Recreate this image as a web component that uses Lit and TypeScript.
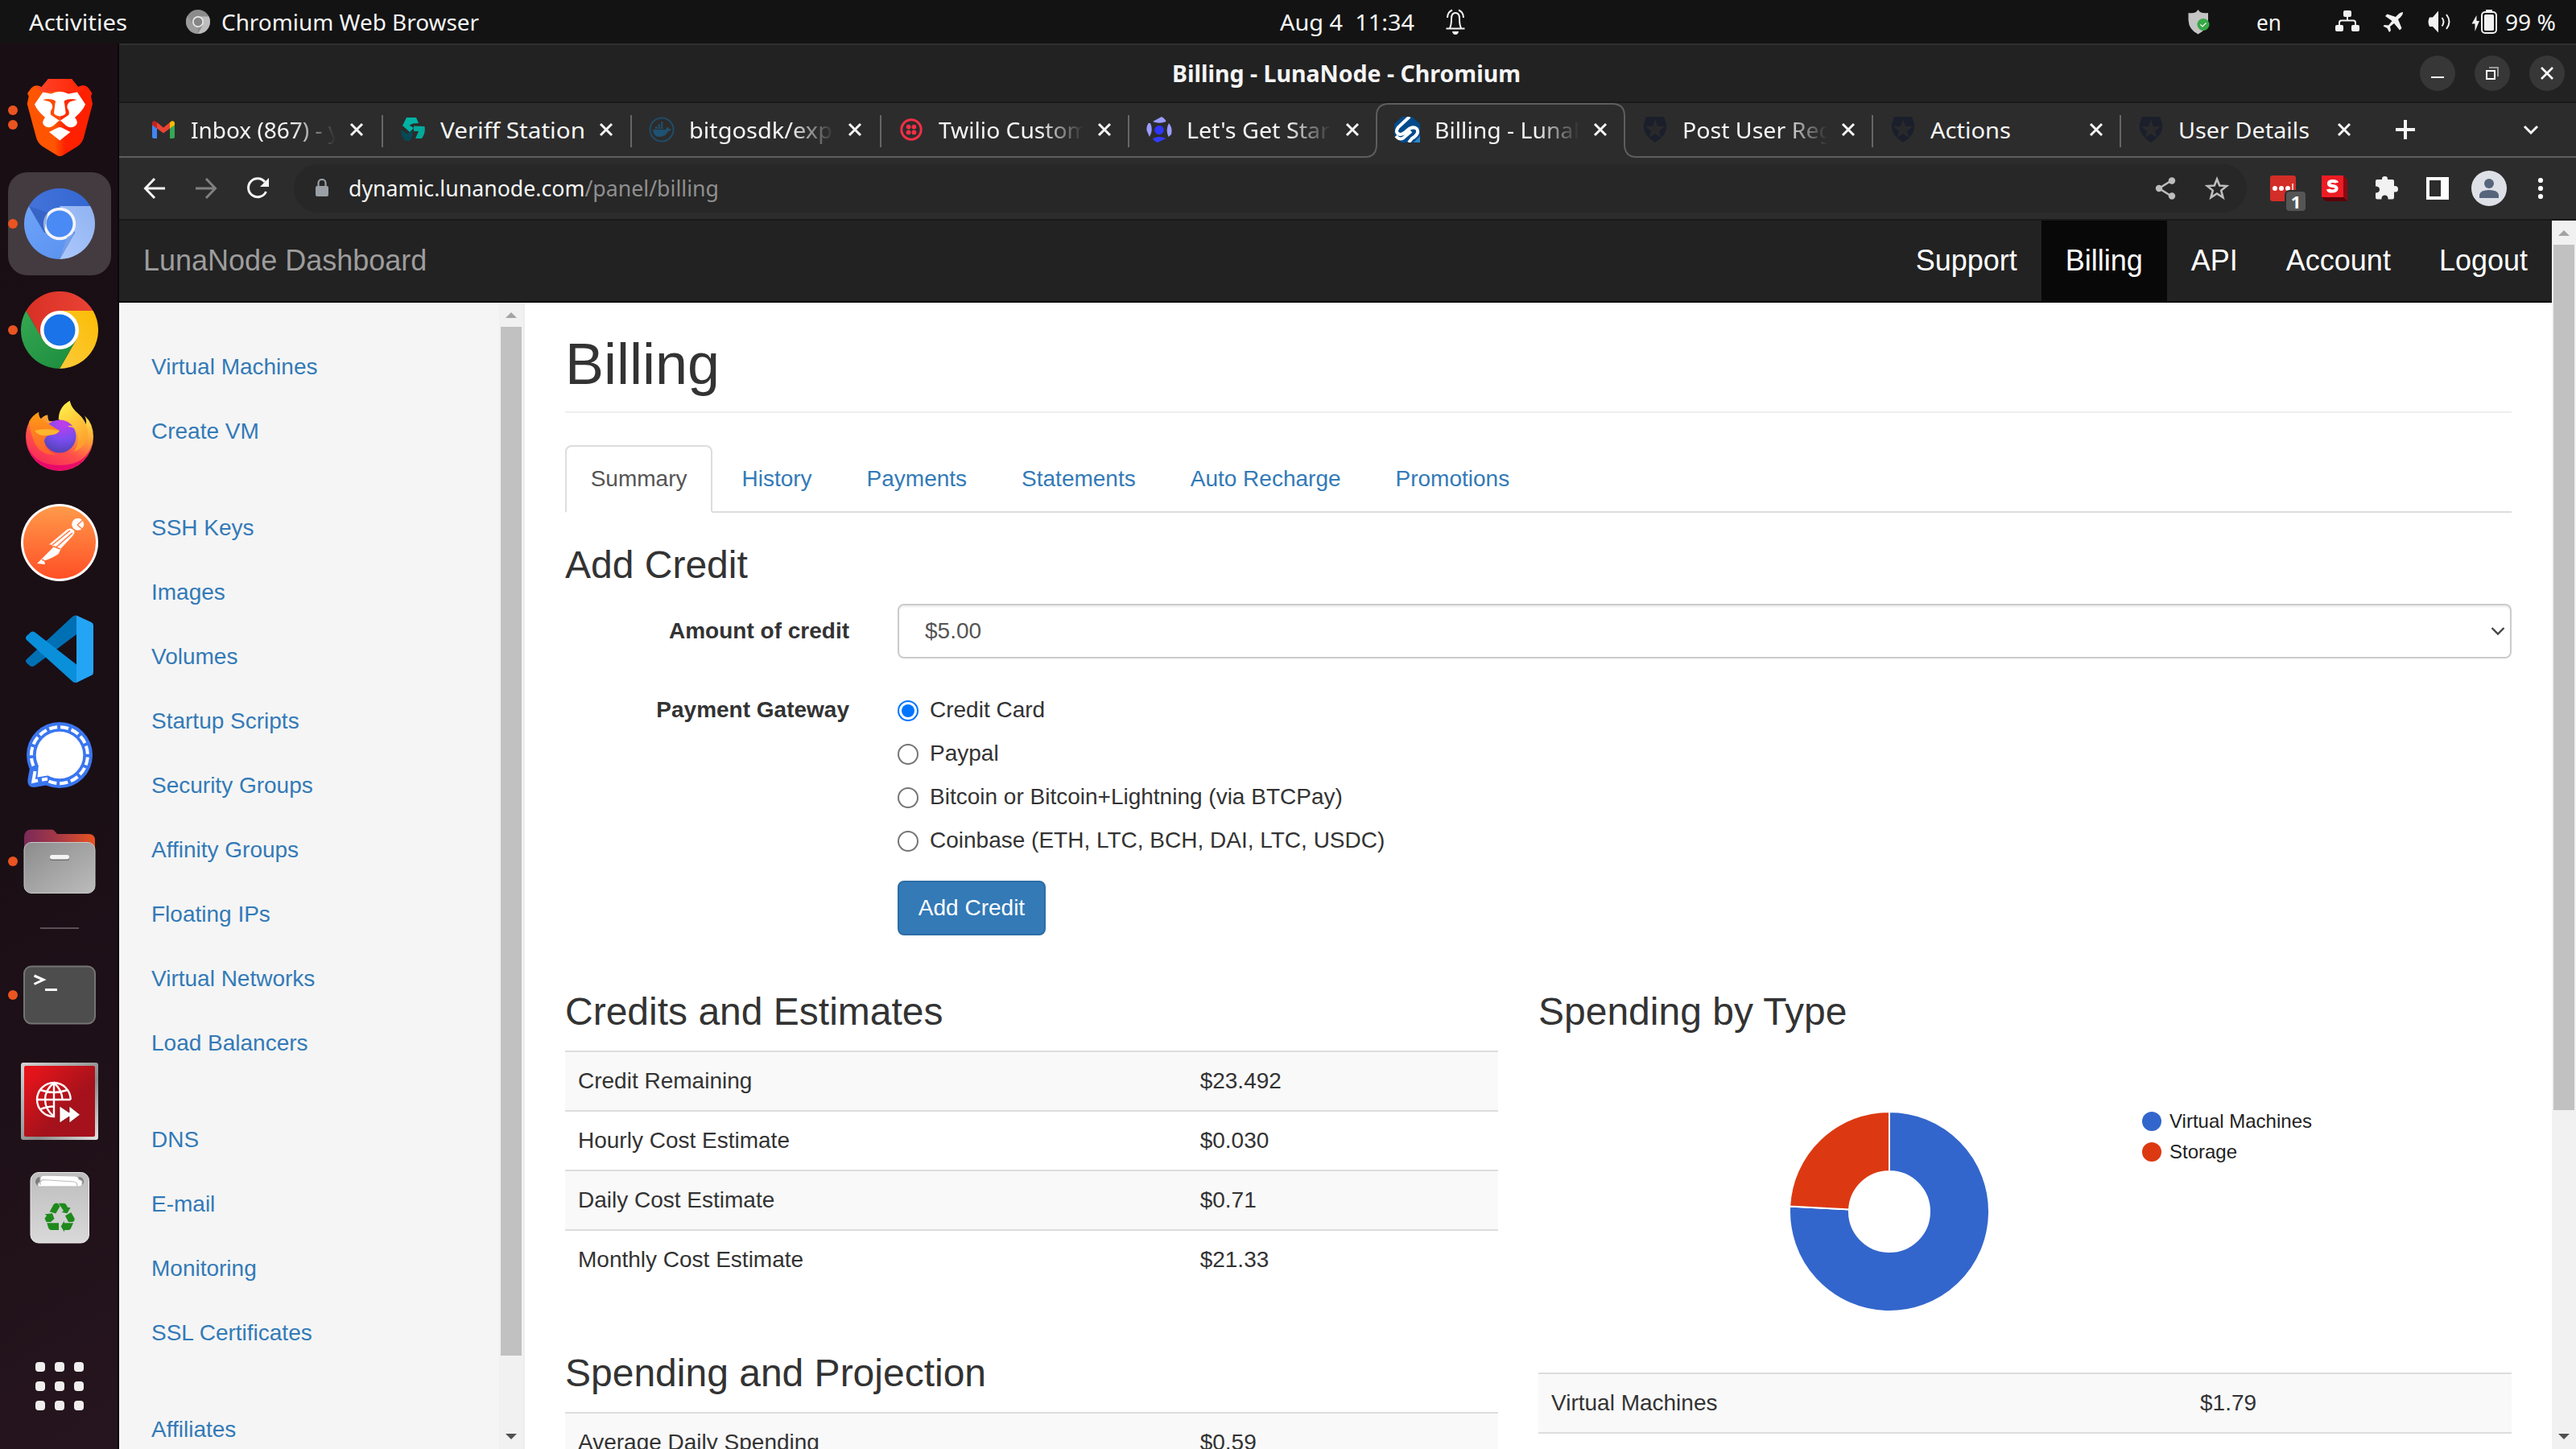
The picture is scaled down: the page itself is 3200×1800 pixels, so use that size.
import { LitElement, html, svg, css } from "lit";
import { customElement } from "lit/decorators.js";
import { classMap } from "lit/directives/class-map.js";

/* Shell label: real text set to a fixed advance width. */
const label = (text: unknown, width: number, color = "#f5f5f5", weight = 400) => html`
  <svg class="label" width=${width} height="40" viewBox="0 0 ${width} 40">
    <text x="0" y="31" fill=${color} font-weight=${weight} textLength=${width} lengthAdjust="spacingAndGlyphs">${text}</text>
  </svg>`;

const icon = (w: number, h: number, body: unknown) => html`
  <svg class="icon" width=${w} height=${h} viewBox="0 0 ${w} ${h}">${body}</svg>`;

/* ---------- dock artwork, 96 x 96 ---------- */
const brave = svg`
  <defs>
    <linearGradient id="bv" x1="0" x2="1"><stop offset=".42" stop-color="#ff5500"/><stop offset=".58" stop-color="#ff2000"/></linearGradient>
    <linearGradient id="bt" x1="0" x2="1"><stop offset="0" stop-color="#ff452a"/><stop offset="1" stop-color="#ff2000"/></linearGradient>
  </defs>
  <path fill="url(#bv)" d="M34 0H63L71 10Q79 6 84 11.500L88.500 18L87 21.500L89 31L78 73Q76 80 70 84L53 94.500Q48.300 97.500 44 94.500L27 84Q21 80 19 73L7.700 31L9.700 21.500L8 18L12.700 11.500Q18 6 25.700 10Z"/>
  <path fill="url(#bt)" d="M34 0H63L71 10Q79 6 84 11.500L70 17L48.300 15L27 17L18 10L25.700 10Z"/>
  <path fill="#fff" d="M27.300 16.400L37.700 18.400Q48.300 13 59 18.400L70 16.400L80 31.400Q78 38 67 48Q72 54 68 58Q62 62.500 56 58L50 52.500Q48.300 51.300 46.600 52.500L40.500 58Q34 62.500 29 58Q25 54 30 48Q19 38 17 31.400Z"/>
  <path fill="#ff4a00" d="M27 26Q36 23.500 42.500 27Q43.500 28.500 42.500 30.500L41 42Q41 45 48.300 46.500V52L45 50L37 44.500Q36 40 39 36.500Q40 31.500 36 28.500Q32 27 27 26Z"/>
  <path fill="#ff2a00" d="M69.600 26Q60.600 23.500 54.100 27Q53.100 28.500 54.100 30.500L55.600 42Q55.600 45 48.300 46.500V52L51.600 50L59.600 44.500Q60.600 40 57.600 36.500Q56.600 31.500 60.600 28.500Q64.600 27 69.600 26Z"/>
  <path fill="#fff" d="M35 66L46 60.500Q48.300 59.500 50.600 60.500L61.500 66L48.300 76.500Z"/>`;

const chromeWheel = (id: string, a: string[], b: string[], c: string[], ring: string, dot: string, r1: number, r2: number) => svg`
  <defs>
    <linearGradient id="${id}a" x1="0" x2="1"><stop offset="0" stop-color=${a[0]}/><stop offset="1" stop-color=${a[1]}/></linearGradient>
    <linearGradient id="${id}b" x1=".3" y1="1" x2="1" y2="0"><stop offset="0" stop-color=${b[0]}/><stop offset="1" stop-color=${b[1]}/></linearGradient>
    <linearGradient id="${id}c" x1="0" y1="0" x2=".8" y2="1"><stop offset="0" stop-color=${c[0]}/><stop offset="1" stop-color=${c[1]}/></linearGradient>
  </defs>
  <circle cx="48" cy="48" r="30" fill=${a[0]}/>
  <path fill="url(#${id}a)" d="M6.400 24A48 48 0 0 1 89.600 24H48L27.200 60Z"/>
  <path fill="url(#${id}b)" d="M89.600 24A48 48 0 0 1 48 96L68.800 60L48 24Z"/>
  <path fill="url(#${id}c)" d="M48 96A48 48 0 0 1 6.400 24L27.200 60H68.800Z"/>
  <circle cx="48" cy="48" r=${r1} fill=${ring}/><circle cx="48" cy="48" r=${r2} fill=${dot}/>`;

const chromium = svg`<g transform="translate(4 4) scale(.9167)">
  ${chromeWheel("cm", ["#4373da", "#3467d2"], ["#a9c6fb", "#8fb2f0"], ["#6ea3fa", "#5b93f0"], "#f4f5f9", "#4a8af4", 22, 18)}
  <path fill="#2a56b4" opacity=".45" d="M6.400 24L27.200 60L32 33Z"/>
  <path fill="#7da3e6" opacity=".7" d="M48 96L68.800 60L58 66Z"/></g>`;
const chrome = chromeWheel("ch", ["#d93025", "#ea4335"], ["#fcc934", "#fbbc04"], ["#34a853", "#1e8e3e"], "#fff", "#1a73e8", 24, 19.500);

const firefox = svg`
  <defs>
    <linearGradient id="fa" x1=".8" y1=".1" x2=".35" y2="1"><stop offset="0" stop-color="#fff44f"/><stop offset=".35" stop-color="#ffa436"/><stop offset=".65" stop-color="#ff4f4b"/><stop offset="1" stop-color="#f5275a"/></linearGradient>
    <radialGradient id="fb" cx=".6" cy=".1" r="1"><stop offset="0" stop-color="#c63be8"/><stop offset=".5" stop-color="#7a4df0"/><stop offset="1" stop-color="#4a3fa8"/></radialGradient>
    <linearGradient id="fc" x1=".2" y1="0" x2=".6" y2="1"><stop offset="0" stop-color="#fff14a"/><stop offset="1" stop-color="#ff9a2b"/></linearGradient>
    <linearGradient id="fd" x1="0" y1="0" x2="0" y2="1"><stop offset="0" stop-color="#ff9d14"/><stop offset="1" stop-color="#ff5f30"/></linearGradient>
  </defs>
  <path fill="url(#fa)" d="M22.300 18Q21 24 23.500 27.500Q28 22 33.300 21.400Q33 26 35 29L48 30Q46 12 60.700 4Q62 12 70 19Q78 26 80.700 33Q82 28 79.300 22.500Q90 32 90 49A42 42 0 0 1 6 49Q6 28 22.300 18Z"/>
  <path fill="#e3006f" opacity=".8" d="M6.500 55A42 42 0 0 0 89.500 55Q82 84 48 84Q14 84 6.500 55Z"/>
  <circle cx="48" cy="48" r="20.500" fill="url(#fb)"/>
  <path fill="url(#fc)" d="M46.700 27Q47 11 60.700 4Q62 12 70 19Q81 28 83 42Q84 60 66 67Q74 55 70 44Q68 36 58 36Q62 33 66 37Q60 27 46.700 27Z"/>
  <path fill="url(#fd)" d="M10 30Q14 22 22 18Q22 25 27 28Q33 31 38 35L48 41Q46 45 38 46Q30 47 29 53Q30 66 44 71Q26 72 18 58Q12 46 10 30Z"/>
  <path fill="#ffb52e" d="M17 41Q30 37 48 41Q45 46 36 46.500Q22 49 17 41Z"/>`;

const postman = svg`
  <defs><linearGradient id="pm" x1="0" y1="0" x2="0" y2="1"><stop offset="0" stop-color="#ff9a4a"/><stop offset="1" stop-color="#ff4f26"/></linearGradient></defs>
  <circle cx="48" cy="48" r="48" fill="#fff"/><circle cx="48" cy="48" r="45" fill="url(#pm)"/>
  <circle cx="70.700" cy="25.300" r="7.500" fill="#fff"/>
  <path d="M70 26L77 20M70 26L76 31" stroke="#ff7a3c" stroke-width="1.300" fill="none"/>
  <path fill="#fff" d="M35 50.500L57 32Q62 28.500 66 33Q67.500 36 64 40L50 55L46.700 62Q40 67 29 70.500L30 75L20 74L25.500 68.500L40.500 53.500L38 50.500Z"/>
  <path d="M39 51L61 33M43.500 54L64 36M40 52.500L49 56M26 69L30 71" stroke="#ff7439" stroke-width="1.500" fill="none"/>`;

const vscode = svg`
  <path fill="#0070b4" d="M7 61L64 8Q66 6 69 6.500V30L17 69Q14 71 11 69L7 65.500Q5 63 7 61Z"/>
  <path fill="#0a8fdb" d="M7 32L12 27.500Q14.500 25.500 17.500 27.500L69 67.500V90Q66 90.500 64 88.500L7 37Q5 34.500 7 32Z"/>
  <path fill="#24a4f4" d="M69 6.500L87.500 15Q90 16.200 90 19V77Q90 80 87.500 81L69 90Z"/>`;

const signal = svg`
  <circle cx="48" cy="48" r="41" fill="#3a76f0"/>
  <path fill="#3a76f0" d="M11 64L8.300 79Q8 88.500 17 88L34 85Z"/>
  <path fill="none" stroke="#fff" stroke-width="4" stroke-dasharray="10.200 3.800" d="M34.500 80.500A35 35 0 1 0 15.500 61.500"/>
  <path fill="none" stroke="#fff" stroke-width="4" d="M17.500 68L15.300 80.700L21 79.500M26 78.700L33 77.500"/>
  <circle cx="48" cy="48" r="29.300" fill="#fff"/><path fill="#fff" d="M22 60L20.500 75.500L36 73Z"/>`;

const files = svg`
  <defs>
    <linearGradient id="fl" x1="0" x2="1"><stop offset="0" stop-color="#7a2a58"/><stop offset=".5" stop-color="#a83a45"/><stop offset="1" stop-color="#e95420"/></linearGradient>
    <linearGradient id="fg" x1="0" y1="0" x2="1" y2="1"><stop offset="0" stop-color="#8c8c8c"/><stop offset="1" stop-color="#bcbcbc"/></linearGradient>
  </defs>
  <path fill="url(#fl)" d="M4 50V18Q4 8.500 13 8.500H38Q40.500 8.500 42 10.500L45 14H84Q92 14 92 22V50Z"/>
  <rect x="4" y="24.500" width="88" height="63" rx="9" fill="url(#fg)" stroke="#c9c9c9"/>
  <rect x="36" y="42" width="24" height="5" rx="2.500" fill="#6e6e6e"/><rect x="36" y="40" width="24" height="5.500" rx="2.700" fill="#f4f4f4"/>`;

const terminal = svg`
  <rect x="4" y="12.500" width="88" height="71" rx="9" fill="#4d4d4d" stroke="#747474" stroke-width="2"/>
  <path d="M16.500 24L28 29L16.500 34.500" fill="none" stroke="#fff" stroke-width="3"/><path d="M30 41.500H45" stroke="#fff" stroke-width="3"/>`;

const remote = svg`
  <defs>
    <linearGradient id="rr" x1="0" y1="0" x2="1" y2="1"><stop offset=".1" stop-color="#e5141b"/><stop offset=".6" stop-color="#a5121b"/></linearGradient>
    <linearGradient id="rg" x1="0" y1="0" x2="1" y2="1"><stop offset="0" stop-color="#d4d4d4"/><stop offset=".6" stop-color="#8a8a8a"/><stop offset="1" stop-color="#e4e4e4"/></linearGradient>
  </defs>
  <rect width="96" height="96" rx="3" fill="url(#rg)"/><rect x="4" y="4" width="88" height="88" rx="2" fill="url(#rr)"/>
  <g fill="none" stroke="#fff" stroke-width="2.400">
    <path d="M61.700 46H20A21 21 0 0 0 41 67V25A21 21 0 0 0 20 46"/><path d="M41 25A21 21 0 0 1 61.700 46"/>
    <path d="M41 25Q30 34 30 46T41 67M41 25Q51 34 51.500 46M24 34Q41 40 58 34M24 58Q32 54.500 41 54.500"/>
  </g>
  <path fill="#fff" stroke="#7d0d13" stroke-width=".8" d="M48 54L60 62V54L73.500 64.700L60 75V67L48 75Z"/>`;

const trash = svg`
  <defs><linearGradient id="tr" x1="0" y1="0" x2="0" y2="1"><stop offset="0" stop-color="#bdbdbd"/><stop offset="1" stop-color="#d9d9d9"/></linearGradient></defs>
  <rect x="12" y="4.500" width="72.500" height="87.500" rx="10" fill="url(#tr)" stroke="#ececec"/>
  <rect x="18" y="10" width="60" height="12" rx="6" fill="#7c7c7c"/>
  <path fill="#fff" stroke="#bbb" stroke-width="1.200" d="M24 20V11Q25 8 29 8L67 9Q71 9 72 13L76 15V20Q76 22 72 22H23Q20 22 21.500 18L27 13.500L66 16Q70 16 70 22"/>
  <path fill="#1f8a1c" d="M35.700 53.200L40.700 44Q43 41.500 46 43L48.500 46.500L43.300 55.400ZM46.700 42.700H54Q56 43 58 47.700L61.500 48.300L57.500 55.200L50.500 53.800L53 52.300ZM29.700 56.200L39 55.200L41.500 62L37 66H31.500L29.500 61.500L32 58ZM32.300 67.300H47V76H37Q35 76 34 73ZM55 58.300L62.300 54L66.700 61.800Q67 66 63 66H59ZM49.700 71.500L53.700 64.500V67.300H65L62 74Q61 76 59 76H54V78.600Z"/>`;

interface DockItem { art: unknown; dots: number; active?: boolean }
const dockTop: DockItem[] = [
  { art: brave, dots: 2 }, { art: chromium, dots: 1, active: true }, { art: chrome, dots: 1 }, { art: firefox, dots: 0 },
  { art: postman, dots: 0 }, { art: vscode, dots: 0 }, { art: signal, dots: 0 }, { art: files, dots: 1 },
];
const dockBottom: DockItem[] = [{ art: terminal, dots: 1 }, { art: remote, dots: 0 }, { art: trash, dots: 0 }];

/* ---------- tab favicons, 32 x 32 ---------- */
const gmail = svg`
  <path fill="#4285f4" d="M2 10L8 14V27H4Q2 27 2 25Z"/><path fill="#34a853" d="M24 14L30 10V25Q30 27 28 27H24Z"/>
  <path fill="#ea4335" d="M8 7L16 13.500L24 7V14.500L16 20.500L8 14.500Z"/>
  <path fill="#c5221f" d="M2 8.500Q2 5 5.500 5.200L8 7V14.500L2 10.200Z"/><path fill="#fbbc04" d="M30 8.500Q30 5 26.500 5.200L24 7V14.500L30 10.200Z"/>`;
const veriff = svg`
  <path fill="#00b3a4" d="M8 1H20L23 8L16 8.500L11.500 10.500L17 14L12 19L3 11Z"/>
  <path fill="#00a99b" d="M17 11.500L30.500 12Q32 20 27 27H19L23 18H17Z"/><path fill="#054a55" d="M1 16L8.500 21L15.500 17V24L12 30H7Q1 25 1 16Z"/>`;
const docker = svg`
  <circle cx="16" cy="16" r="14.500" fill="none" stroke="#1f4c68" stroke-width="2"/>
  <path fill="#1f5273" d="M5 16H21Q22 13 24 13L25 15L28 15.500Q27 18 24 18Q21 25 13 25Q6 25 5 16ZM8 12.500h2.500v2.500h-2.500zM11.500 12.500h2.500v2.500h-2.500zM15 12.500h2.500v2.500h-2.500zM11.500 9.500h2.500v2.300h-2.500zM15 9.500h2.500v2.300h-2.500zM15 6.500h2.500v2.300h-2.500z"/>`;
const twilio = svg`
  <circle cx="16" cy="16" r="12.200" fill="none" stroke="#f22f46" stroke-width="3"/>
  <g fill="#f22f46"><circle cx="12.600" cy="12.600" r="2.900"/><circle cx="19.400" cy="12.600" r="2.900"/><circle cx="12.600" cy="19.400" r="2.900"/><circle cx="19.400" cy="19.400" r="2.900"/></g>`;
const orbit = svg`
  <circle cx="16" cy="16.500" r="5.700" fill="#2f37ff"/>
  <path fill="#9a9dff" d="M8 6L19 0Q24 3 24.500 6Q16 9.500 8 6ZM2.500 8Q0 12 0.500 17L4 25Q9 17 5 8ZM28 8Q33 14 31 22L27.500 25Q23.500 16 28 8Z"/>
  <path fill="#343cff" d="M8 27Q16 23 24.500 27L14 32Q10 31 8 27Z"/>`;
const luna = svg`
  <path fill="#004a8c" d="M10 0H22L32 9V32H9L0 23V9Z"/><path fill="#2f86c5" d="M24 32L32 24V32Z"/>
  <path d="M19 0L5 13Q0 20 7 22Q11 22 16 17Q23 11 28 15Q32 21 22 27L18 32M2 24Q8 31 14 24L21 18" fill="none" stroke="#fff" stroke-width="4"/>`;
const auth0 = svg`
  <path fill="#1b1f2b" d="M5 0H27L30 9Q32 22 16 32Q0 22 2 9Z"/>
  <path fill="#2c2c2c" d="M16 3L19 12H28L21 18L23.500 26L16 21L8.500 26L11 18L4 12H13Z" opacity=".85"/>`;

interface Tab { art: unknown; text: string; textWidth: number; width: number; active?: boolean; sep?: boolean; fade?: boolean }
const tabs: Tab[] = [
  { art: gmail, text: "Inbox (867) - y", textWidth: 185, width: 310, sep: true, fade: true },
  { art: veriff, text: "Veriff Station", textWidth: 180, width: 309, sep: true },
  { art: docker, text: "bitgosdk/exp", textWidth: 178, width: 310, sep: true, fade: true },
  { art: twilio, text: "Twilio Custom", textWidth: 186, width: 308, sep: true, fade: true },
  { art: orbit, text: "Let's Get Star", textWidth: 178, width: 308, fade: true },
  { art: luna, text: "Billing - LunaN", textWidth: 194, width: 308, active: true, fade: true },
  { art: auth0, text: "Post User Reg", textWidth: 187, width: 308, sep: true, fade: true },
  { art: auth0, text: "Actions", textWidth: 100, width: 308, sep: true },
  { art: auth0, text: "User Details", textWidth: 163, width: 308 },
];

const menuGroups = [
  ["Virtual Machines", "Create VM"],
  ["SSH Keys", "Images", "Volumes", "Startup Scripts", "Security Groups", "Affinity Groups", "Floating IPs", "Virtual Networks", "Load Balancers"],
  ["DNS", "E-mail", "Monitoring", "SSL Certificates"],
  ["Affiliates"],
];

const slices = [
  { name: "Virtual Machines", share: 0.7583, color: "#3366cc" },
  { name: "Storage", share: 0.2417, color: "#dc3912" },
];

@customElement("app-root")
export class AppRoot extends LitElement {
  static styles = css`
    :host { display: block; font-family: "Liberation Sans", Arial, sans-serif; }
    * { box-sizing: border-box; }
    svg { display: block; flex: none; }
    .screen { width: 3200px; height: 1800px; overflow: hidden; display: flex; flex-direction: column; background: #131313; }
    .label { overflow: visible; font-family: "Noto Sans", "Open Sans", sans-serif; font-size: 28px; }
    .label text { white-space: pre; }

    .topbar { height: 54px; flex: none; background: #131313; display: grid; grid-template-columns: 1590px 1fr auto; align-items: center; }
    .group { display: flex; align-items: center; }
    .g-left { padding-left: 36px; }
    .g-left .icon { margin: 0 14px 0 73px; }
    .g-mid { gap: 38px; }
    .g-right { padding-right: 25px; }
    .sp-en { margin: 0 67px 0 58px; }
    .sp-a { margin-right: 29px; } .sp-b { margin-right: 29px; } .sp-c { margin-right: 25px; } .sp-d { margin-right: 10px; }

    .below { flex: 1; min-height: 0; display: flex; }
    .dock { width: 148px; flex: none; background: linear-gradient(150deg, #190e14 0%, #1b0f16 55%, #1e1018 72%, #26151e 100%); border-right: 2px solid #0c070a; padding-top: 26px; display: flex; flex-direction: column; }
    .dock-item { height: 132px; flex: none; display: grid; place-items: center; position: relative; padding-left: 2px; }
    .tile { width: 128px; height: 128px; border-radius: 24px; display: grid; place-items: center; }
    .tile.on { background: #443b40; }
    .dots { position: absolute; left: 10px; top: 0; bottom: 0; display: flex; flex-direction: column; justify-content: center; gap: 5.500px; }
    .dots i { width: 12px; height: 12px; border-radius: 6px; background: #e95420; }
    .dock-sep { height: 2px; width: 48px; background: #5a5056; margin: 16px 0 16px 50px; flex: none; }
    .apps { display: grid; grid-template-columns: repeat(3, 12px); gap: 12px; margin: 126px 0 0 44px; }
    .apps i { width: 12px; height: 12px; border-radius: 4px; background: #f0efee; }

    .window { flex: 1; min-width: 0; display: flex; flex-direction: column; background: #2c2c2c; }
    .titlebar { height: 74px; flex: none; background: #222; border-top: 2px solid #303030; border-bottom: 2px solid #191919; display: grid; grid-template-columns: 1308px 1fr auto; align-items: center; }
    .winbtns { display: flex; gap: 24px; padding-right: 14px; }
    .winbtn { width: 44px; height: 44px; border-radius: 22px; background: #373737; display: grid; place-items: center; }
    .tabstrip { height: 68px; flex: none; border-bottom: 2px solid #5e5e5e; display: flex; padding-left: 17px; }
    .tab { height: 66px; flex: none; display: flex; align-items: center; position: relative; padding-left: 22px; }
    .tab .icon { z-index: 1; position: relative; }
    .tab-text { width: 180px; margin-left: 18px; overflow: hidden; height: 48px; padding-top: 4px; position: relative; z-index: 1; }
    .tab-text.fade { -webkit-mask-image: linear-gradient(90deg, #000 70%, transparent 100%); mask-image: linear-gradient(90deg, #000 70%, transparent 100%); }
    .tab .x { margin-left: 17px; }
    .tab.sep::after { content: ""; position: absolute; right: -1px; top: 15px; width: 2px; height: 40px; background: #666; }
    .outline { position: absolute; left: -16px; top: 0; }
    .plus { margin-left: 34px; align-self: center; }
    .caret { margin: 0 46px 0 auto; align-self: center; }
    .toolbar { height: 78px; flex: none; border-bottom: 2px solid #191919; display: flex; align-items: center; padding-left: 28px; }
    .nav { display: flex; gap: 32px; }
    .omni { margin-left: 29px; width: 2426px; height: 60px; border-radius: 30px; background: #272727; display: flex; align-items: center; padding: 0 21px 0 26px; }
    .url { margin: 0 0 2px 24px; }
    .path { fill: #8f8f8f; }
    .omni-end { margin-left: auto; display: flex; gap: 32px; }
    .exts { display: flex; align-items: center; margin-left: 29px; }
    .ext { position: relative; }
    .badge { position: absolute; left: 20px; top: 20px; width: 24px; height: 24px; border-radius: 4px; background: #555; color: #fff; font: bold 22px/25px "Noto Sans", sans-serif; text-align: center; box-shadow: 0 0 0 2px #2c2c2c; }
    .e2 { margin-left: 32px; } .e3 { margin-left: 34px; } .e4 { margin-left: 34px; } .e5 { margin-left: 28px; } .e6 { margin-left: 37px; }

    .viewport { flex: 1; min-height: 0; display: flex; background: #fff; }
    .page { flex: 1; min-width: 0; display: flex; flex-direction: column; font-size: 28px; line-height: 40px; color: #333; }
    .navbar { height: 102px; flex: none; background: #222; border-bottom: 2px solid #080808; display: flex; font-size: 36px; line-height: 100px; color: #fff; padding-left: 30px; }
    .brand { color: #9d9d9d; margin-right: auto; }
    .navlink { padding: 0 30px; }
    .navlink.on { background: #080808; }
    .body { flex: 1; min-height: 0; display: flex; }
    .side { width: 504px; flex: none; background: #f5f5f5; border-right: 2px solid #eee; display: flex; }
    .menu { flex: 1; padding: 40px 0 0 40px; overflow: hidden; color: #337ab7; }
    .menu-group { margin-bottom: 40px; }
    .menu-item { height: 80px; padding-top: 20px; }
    .bar { width: 30px; flex: none; background: #f1f1f1; display: flex; flex-direction: column; align-items: center; }
    .bar .up { margin: 12px 0 11px; } .bar .down { margin: auto 0 12px; }
    .thumb { width: 26px; background: #c1c1c1; flex: none; }
    .thumb.short { height: 1278px; } .thumb.page-thumb { height: 1075px; }

    .main { flex: 1; min-width: 0; overflow: hidden; padding: 36px 50px 0; }
    .title { margin: 0; font-weight: 400; font-size: 72px; line-height: 80px; padding-bottom: 19px; border-bottom: 2px solid #eee; }
    .tabs { display: flex; gap: 4px; margin-top: 40px; height: 84px; box-shadow: inset 0 -2px 0 #ddd; color: #337ab7; margin-left: -0.330px; }
    .ptab { padding: 22px 32px; }
    .ptab.on { border: 2px solid #ddd; border-bottom-color: #fff; border-radius: 8px 8px 0 0; background: #fff; color: #555; padding: 20px 30px; }
    .h3 { margin: 0; font-weight: 400; font-size: 48px; line-height: 53px; }
    .h3.credit { margin: 38px 0 22px; }
    .row { display: grid; grid-template-columns: 353px 1fr; column-gap: 60px; margin-bottom: 30px; }
    .lbl { font-weight: 700; text-align: right; padding-top: 14px; }
    .select { height: 68px; border: 2px solid #ccc; border-radius: 8px; box-shadow: inset 0 2px 2px rgba(0,0,0,.075); color: #555; padding: 0 6px 0 32px; display: flex; align-items: center; justify-content: space-between; }
    .radios { display: flex; flex-direction: column; gap: 14px; padding-top: 14px; }
    .opt { display: flex; align-items: center; gap: 14px; height: 40px; }
    .radio { width: 26px; height: 26px; border-radius: 13px; border: 2px solid #767676; margin-top: 2px; flex: none; display: grid; place-items: center; background: #fff; }
    .radio.on { border-color: #0075ff; }
    .radio.on::after { content: ""; width: 16px; height: 16px; border-radius: 8px; background: #0075ff; }
    .btn { margin-left: 413px; width: 184px; height: 68px; border: 2px solid #2e6da4; border-radius: 8px; background: #337ab7; color: #fff; text-align: center; line-height: 64px; }
    .cols { display: grid; grid-template-columns: 1159px 1209px; column-gap: 50px; margin-top: 68px; }
    .table { margin-top: 22px; }
    .tr { display: grid; grid-template-columns: 2fr 1fr; border-top: 2px solid #ddd; height: 74px; }
    .tr:nth-child(odd) { background: #f9f9f9; }
    .td { padding: 16px; }
    .gap { margin-top: 78px; }
    .chart { margin-top: 22px; font-size: 24px; }
    .chart + .table { margin-top: 0; }
  `;

  private dockItem(d: DockItem) {
    return html`<div class="dock-item">
      <div class=${classMap({ tile: true, on: !!d.active })}><svg width="96" height="96" viewBox="0 0 96 96">${d.art}</svg></div>
      <div class="dots">${Array.from({ length: d.dots }, () => html`<i></i>`)}</div>
    </div>`;
  }

  private tab(t: Tab) {
    return html`<div class=${classMap({ tab: true, sep: !!t.sep })} style="width:${t.width}px">
      ${t.active ? html`<svg class="outline" width="342" height="68" viewBox="0 0 342 68">
        <path fill="#2c2c2c" d="M0 68V67H2Q16 67 16 51V17Q16 2 31 2H309Q324 2 324 17V51Q324 67 339 67H342V68Z"/>
        <path fill="none" stroke="#5e5e5e" stroke-width="2" d="M0 67H2Q16 67 16 51V16Q16 1 31 1H309Q324 1 324 16V51Q324 67 339 67H342"/></svg>` : ""}
      ${icon(32, 32, t.art)}
      <div class=${classMap({ "tab-text": true, fade: !!t.fade })}>${label(t.text, t.textWidth)}</div>
      <svg class="icon x" width="18" height="18" viewBox="0 0 18 18"><path d="M2 2L16 16M16 2L2 16" stroke="#f5f5f5" stroke-width="3"/></svg>
    </div>`;
  }

  private donut(cx: number, cy: number, r: number, r0: number) {
    let a = -Math.PI / 2;
    return slices.map((s) => {
      const b = a + s.share * Math.PI * 2;
      const p = (rad: number, t: number) => `${(cx + rad * Math.cos(t)).toFixed(2)} ${(cy + rad * Math.sin(t)).toFixed(2)}`;
      const big = s.share > 0.5 ? 1 : 0;
      const d = `M${p(r, a)}A${r} ${r} 0 ${big} 1 ${p(r, b)}L${p(r0, b)}A${r0} ${r0} 0 ${big} 0 ${p(r0, a)}Z`;
      a = b;
      return svg`<path d=${d} fill=${s.color} stroke="#fff" stroke-width="2"/>`;
    });
  }

  private table(rows: string[][]) {
    return html`<div class="table">${rows.map((r) => html`<div class="tr"><div class="td">${r[0]}</div><div class="td">${r[1]}</div></div>`)}</div>`;
  }

  private topbar() {
    return html`<div class="topbar">
      <div class="group g-left">${label("Activities", 122)}
        ${icon(30, 30, svg`<circle cx="15" cy="15" r="15" fill="#8c8c8c"/><path fill="#bdbdbd" d="M15 8.500H28.500A15 15 0 0 1 15 30L21 19Z"/><path fill="#9b9b9b" d="M2 7.500L9 18.500L15 21V30A15 15 0 0 1 2 7.500Z"/><circle cx="15" cy="15" r="7" fill="#e8e8e8"/><circle cx="15" cy="15" r="5.300" fill="#858585"/>`)}
        ${label("Chromium Web Browser", 320)}</div>
      <div class="group g-mid">${label("Aug 4  11:34", 167)}
        ${icon(26, 32, svg`<path d="M6 24Q8 20 8 12Q8 5 13 5T18 12Q18 20 20 24M1.500 24.500H24.500M3 11Q3 4 9 1.500M23 11Q23 4 17 1.500" fill="none" stroke="#f2f2f2" stroke-width="2"/><path fill="#f2f2f2" d="M9 28H17Q16.500 32 13 32T9 28Z"/>`)}</div>
      <div class="group g-right">
        ${icon(27, 32, svg`<path fill="#c4c4c4" d="M12.500 1L15 4Q20 6 25 5V14Q24 26 12.500 31.500Q1 26 0.500 14V5Q6 6 10 4Z"/><circle cx="19" cy="19.500" r="7.500" fill="#37a846"/><path d="M15.500 19.500L18 22L22.500 17.500" fill="none" stroke="#fff" stroke-width="1.200"/>`)}
        <div class="sp-en">${label("en", 31)}</div>
        <div class="sp-a">${icon(30, 30, svg`<g fill="#f2f2f2"><rect x="10" y="1" width="10" height="8" rx="2"/><rect x="0" y="19" width="10" height="8" rx="2"/><rect x="20" y="19" width="10" height="8" rx="2"/></g><path d="M15 8V13M5 20V16Q5 13.500 7.500 13.500H22.500Q25 13.500 25 16V20" fill="none" stroke="#f2f2f2" stroke-width="2"/>`)}</div>
        <div class="sp-b">${icon(26, 28, svg`<path fill="#f2f2f2" d="M25 2Q25.500 6 19 11L23.500 22L21 24.500L14 16L9 20L10 25L8 27L5.500 22L0.500 19.500L2 18L7 18.500L11.500 13L3 7L5.500 4.500L16 8Q21 2 25 2Z"/>`)}</div>
        <div class="sp-c">${icon(30, 28, svg`<path fill="#f2f2f2" d="M3 8.500H7L14 0.500V27.500L7 20H3Q0 14 3 8.500Z"/><path d="M18.500 9Q22.500 14 18.500 19.500M24 5Q31 14 24 23" fill="none" stroke="#f2f2f2" stroke-width="2"/>`)}</div>
        <div class="sp-d">${icon(32, 32, svg`<path fill="#f2f2f2" d="M6.500 8V15H10L4.500 28V18.500H0.500Z"/><rect x="18" y="1" width="8" height="3" fill="#f2f2f2"/><rect x="13" y="4" width="18" height="26" rx="4" fill="none" stroke="#f2f2f2" stroke-width="2"/><rect x="16" y="7" width="12" height="20" rx="1.500" fill="#f2f2f2"/>`)}</div>
        ${label("99 %", 63)}
      </div>
    </div>`;
  }

  private browserChrome() {
    return html`
      <div class="titlebar"><span></span>${label("Billing - LunaNode - Chromium", 433, "#f5f5f5", 700)}
        <div class="winbtns">
          <div class="winbtn">${icon(16, 16, svg`<path d="M0 13H16" stroke="#fff" stroke-width="2"/>`)}</div>
          <div class="winbtn">${icon(16, 16, svg`<path d="M4 1H15V12" fill="none" stroke="#9a9a9a" stroke-width="2"/><rect x="1" y="5" width="10" height="10" fill="none" stroke="#fff" stroke-width="2"/>`)}</div>
          <div class="winbtn">${icon(16, 16, svg`<path d="M1 1L15 15M15 1L1 15" stroke="#fff" stroke-width="2.600"/>`)}</div>
        </div></div>
      <div class="tabstrip">${tabs.map((t) => this.tab(t))}
        <div class="plus">${icon(24, 24, svg`<path d="M12 0V24M0 12H24" stroke="#f5f5f5" stroke-width="4"/>`)}</div>
        <div class="caret">${icon(20, 12, svg`<path d="M2 2L10 10L18 2" fill="none" stroke="#f5f5f5" stroke-width="3"/>`)}</div>
      </div>
      <div class="toolbar">
        <div class="nav">
          ${icon(32, 32, svg`<path d="M29 16H5M16 4L4.500 16L16 28" fill="none" stroke="#f5f5f5" stroke-width="3"/>`)}
          ${icon(32, 32, svg`<path d="M3 16H27M16 4L27.500 16L16 28" fill="none" stroke="#808080" stroke-width="3"/>`)}
          ${icon(32, 32, svg`<path d="M26.500 20A11.500 11.500 0 1 1 25 8" fill="none" stroke="#f5f5f5" stroke-width="3"/><path fill="#f5f5f5" d="M30 3V14H19Z"/>`)}
        </div>
        <div class="omni">
          ${icon(18, 24, svg`<rect x="1" y="9" width="16" height="13" rx="2" fill="#9aa0a6"/><path d="M4.500 10V5.500A4.500 4.500 0 0 1 13.500 5.500V10" fill="none" stroke="#9aa0a6" stroke-width="2.200"/>`)}
          <div class="url">${label(svg`dynamic.lunanode.com<tspan class="path">/panel/billing</tspan>`, 460)}</div>
          <div class="omni-end">
            ${icon(32, 32, svg`<path d="M24 6L8 16L24 26" fill="none" stroke="#bdbdbd" stroke-width="2.600"/><g fill="#bdbdbd"><circle cx="24" cy="6.500" r="4.200"/><circle cx="8" cy="16" r="4.200"/><circle cx="24" cy="25.500" r="4.200"/></g>`)}
            ${icon(32, 32, svg`<path d="M16 4.500L19.200 12.500L28 13L21.200 18.600L23.500 27.300L16 22.500L8.500 27.300L10.800 18.600L4 13L12.800 12.500Z" fill="none" stroke="#bdbdbd" stroke-width="2.600"/>`)}
          </div>
        </div>
        <div class="exts">
          <div class="ext">${icon(32, 32, svg`<rect width="32" height="32" rx="3" fill="#d32d27"/><g fill="#fff"><circle cx="6" cy="16" r="3"/><circle cx="14" cy="16" r="3"/><circle cx="22" cy="16" r="3"/><rect x="27" y="10" width="2" height="12" opacity=".7"/></g>`)}<div class="badge">1</div></div>
          <div class="e2">${icon(32, 32, svg`<path fill="#8c0a12" d="M27 0L32 5V32L27 27Z"/><path fill="#5c0008" d="M0 27H27L32 32H5Z"/><rect width="27" height="27" fill="#ed1c24"/><path d="M19 9Q18.500 7 14 7Q9 7 9 10Q9 12.500 13.500 13Q19 13.500 18.500 16.500Q18 19.500 13 19.500Q8.500 19.500 8 17" fill="none" stroke="#fff" stroke-width="4.200"/>`)}</div>
          <div class="e3">${icon(30, 32, svg`<path fill="#f2f2f2" d="M1 7Q1 5 3 5H9V4Q9 1 12.500 1T16 4V5H22Q24 5 24 7V13H25Q29 13 29 17T25 20.500H24V27Q24 29.500 22 29.500H16.500V28Q16 24.500 12.500 24.500T8.500 28V29.500H3Q1 29.500 1 27V21.500H2Q6 21 6 17.500T2 13.500H1Z"/>`)}</div>
          <div class="e4">${icon(28, 28, svg`<path fill="#fff" fill-rule="evenodd" d="M0 0H28V28H0ZM4 4V24H18V4Z"/>`)}</div>
          <div class="e5">${icon(44, 44, svg`<circle cx="22" cy="22" r="22" fill="#dde1e7"/><g fill="#56657c"><circle cx="22" cy="16" r="6"/><path d="M10 34V30Q11 24 22 24T34 30V34Z"/></g>`)}</div>
          <div class="e6">${icon(10, 32, svg`<g fill="#fff"><circle cx="5" cy="6" r="3.100"/><circle cx="5" cy="16" r="3.100"/><circle cx="5" cy="26" r="3.100"/></g>`)}</div>
        </div>
      </div>`;
  }

  private scrollbar(kind: string) {
    return html`<div class="bar">
      <svg class="up" width="14" height="7" viewBox="0 0 14 7"><path fill="#a3a3a3" d="M7 0L14 7H0Z"/></svg>
      <div class="thumb ${kind}"></div>
      <svg class="down" width="14" height="7" viewBox="0 0 14 7"><path fill="#505050" d="M0 0H14L7 7Z"/></svg>
    </div>`;
  }

  private content() {
    const gateways = ["Credit Card", "Paypal", "Bitcoin or Bitcoin+Lightning (via BTCPay)", "Coinbase (ETH, LTC, BCH, DAI, LTC, USDC)"];
    return html`<div class="main">
      <h1 class="title">Billing</h1>
      <div class="tabs">${["Summary", "History", "Payments", "Statements", "Auto Recharge", "Promotions"].map((t, i) => html`<div class=${classMap({ ptab: true, on: i === 0 })}>${t}</div>`)}</div>
      <h3 class="h3 credit">Add Credit</h3>
      <div class="row"><div class="lbl">Amount of credit</div>
        <div class="select"><span>$5.00</span><svg width="18" height="12" viewBox="0 0 18 12"><path d="M1.500 2L9 9.500L16.500 2" fill="none" stroke="#444" stroke-width="2.400"/></svg></div></div>
      <div class="row"><div class="lbl">Payment Gateway</div>
        <div class="radios">${gateways.map((g, i) => html`<div class="opt"><span class=${classMap({ radio: true, on: i === 0 })}></span><span>${g}</span></div>`)}</div></div>
      <div class="btn">Add Credit</div>
      <div class="cols">
        <div>
          <h3 class="h3">Credits and Estimates</h3>
          ${this.table([["Credit Remaining", "$23.492"], ["Hourly Cost Estimate", "$0.030"], ["Daily Cost Estimate", "$0.71"], ["Monthly Cost Estimate", "$21.33"]])}
          <h3 class="h3 gap">Spending and Projection</h3>
          ${this.table([["Average Daily Spending", "$0.59"]])}
        </div>
        <div>
          <h3 class="h3">Spending by Type</h3>
          <svg class="chart" width="1209" height="400" viewBox="0 0 1209 400">
            ${this.donut(436, 200, 124, 50)}
            ${slices.map((s, i) => svg`<circle cx="762" cy=${88 + i * 38} r="12" fill=${s.color}/><text x="784" y=${96 + i * 38} fill="#222">${s.name}</text>`)}
          </svg>
          ${this.table([["Virtual Machines", "$1.79"], ["", ""]])}
        </div>
      </div>
    </div>`;
  }

  render() {
    return html`<div class="screen">
      ${this.topbar()}
      <div class="below">
        <div class="dock">
          ${dockTop.map((d) => this.dockItem(d))}
          <div class="dock-sep"></div>
          ${dockBottom.map((d) => this.dockItem(d))}
          <div class="apps">${Array.from({ length: 9 }, () => html`<i></i>`)}</div>
        </div>
        <div class="window">
          ${this.browserChrome()}
          <div class="viewport">
            <div class="page">
              <div class="navbar"><div class="brand">LunaNode Dashboard</div>
                ${["Support", "Billing", "API", "Account", "Logout"].map((n) => html`<div class=${classMap({ navlink: true, on: n === "Billing" })}>${n}</div>`)}</div>
              <div class="body">
                <div class="side">
                  <div class="menu">${menuGroups.map((g) => html`<div class="menu-group">${g.map((m) => html`<div class="menu-item">${m}</div>`)}</div>`)}</div>
                  ${this.scrollbar("short")}
                </div>
                ${this.content()}
              </div>
            </div>
            ${this.scrollbar("page-thumb")}
          </div>
        </div>
      </div>
    </div>`;
  }
}
